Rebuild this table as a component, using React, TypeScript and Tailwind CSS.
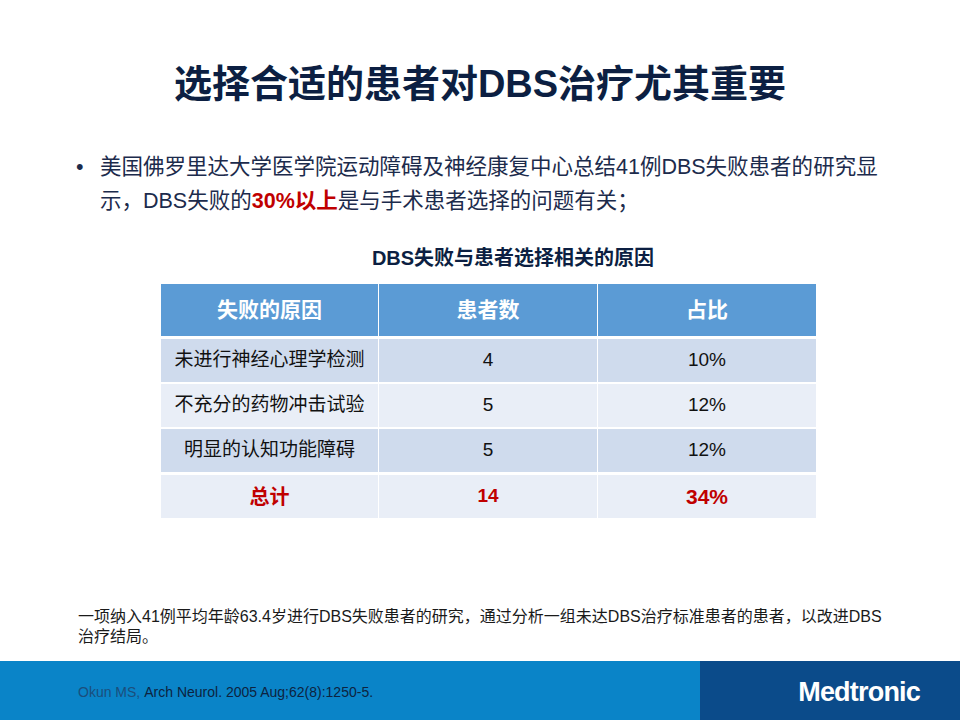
const font = { fontFamily: '"Liberation Sans", "Noto Sans CJK SC", sans-serif' };

const rows = [
    { reason: "未进行神经心理学检测", count: "4", ratio: "10%", bg: "bg-[#cfdbed]" },
    { reason: "不充分的药物冲击试验", count: "5", ratio: "12%", bg: "bg-[#e9eef7]" },
    { reason: "明显的认知功能障碍", count: "5", ratio: "12%", bg: "bg-[#cfdbed]" },
];

export default function App() {
    return (
        <div className="w-[960px] h-[720px] bg-white flex flex-col overflow-hidden" style={font}>
            {/* title */}
            <h1 className="pt-[61px] text-center text-[38px] leading-[46px] font-bold text-[#0c1f42]">
                选择合适的患者对DBS治疗尤其重要
            </h1>

            {/* bullet */}
            <div className="mt-[43px] flex pl-[76px] text-[21.5px] leading-[34px] text-[#1c2b4c]">
                <span className="w-[24px] shrink-0">•</span>
                <p>
                    美国佛罗里达大学医学院运动障碍及神经康复中心总结41例DBS失败患者的研究显
                    <br />
                    示，DBS失败的<span className="font-bold text-[#c00000]">30%以上</span>是与手术患者选择的问题有关；
                </p>
            </div>

            {/* table caption */}
            <div className="mt-[27px] pl-[66px] text-center text-[20px] leading-[26px] font-bold text-[#0c1f42]">
                DBS失败与患者选择相关的原因
            </div>

            {/* table */}
            <div className="mt-[13px] ml-[161px] w-[655px] flex flex-col gap-[2px]">
                <div className="grid grid-cols-[217px_218px_218px] gap-x-[1px] mb-[1px]">
                    {["失败的原因", "患者数", "占比"].map((h) => (
                        <div
                            key={h}
                            className="h-[52px] bg-[#5b9bd5] flex items-center justify-center text-white font-bold text-[21px]"
                        >
                            {h}
                        </div>
                    ))}
                </div>
                {rows.map((r) => (
                    <div key={r.reason} className="grid grid-cols-[217px_218px_218px] gap-x-[1px] text-[19px] text-[#111]">
                        <div className={`h-[43px] ${r.bg} flex items-center justify-center`}>{r.reason}</div>
                        <div className={`h-[43px] ${r.bg} flex items-center justify-center`}>{r.count}</div>
                        <div className={`h-[43px] ${r.bg} flex items-center justify-center`}>{r.ratio}</div>
                    </div>
                ))}
                <div className="grid grid-cols-[217px_218px_218px] gap-x-[1px] mt-[1px] font-bold text-[#c00000]">
                    <div className="h-[43px] bg-[#e9eef7] flex items-center justify-center text-[20px]">总计</div>
                    <div className="h-[43px] bg-[#e9eef7] flex items-center justify-center text-[19px]">14</div>
                    <div className="h-[43px] bg-[#e9eef7] flex items-center justify-center text-[21px]">34%</div>
                </div>
            </div>

            <div className="flex-1" />

            {/* footnote */}
            <p className="pl-[78px] mb-[14px] text-[16px] leading-[20px] text-[#1a1a1a]">
                一项纳入41例平均年龄63.4岁进行DBS失败患者的研究，通过分析一组未达DBS治疗标准患者的患者，以改进DBS
                <br />
                治疗结局。
            </p>

            {/* footer */}
            <div className="h-[59px] flex shrink-0">
                <div className="w-[700px] bg-[#0a84c8] flex items-center pl-[78px] pt-[4px] text-[14px]">
                    <span className="text-[#1b4e7c]">Okun MS,</span>
                    <span className="ml-[4px] text-[#0d2340]">Arch Neurol. 2005 Aug;62(8):1250-5.</span>
                </div>
                <div className="flex-1 bg-[#0b4b8a] flex items-center justify-end pr-[40px] pt-[4px]">
                    <span className="text-white font-bold text-[27px] tracking-[-0.8px]">Medtronic</span>
                </div>
            </div>
        </div>
    );
}
